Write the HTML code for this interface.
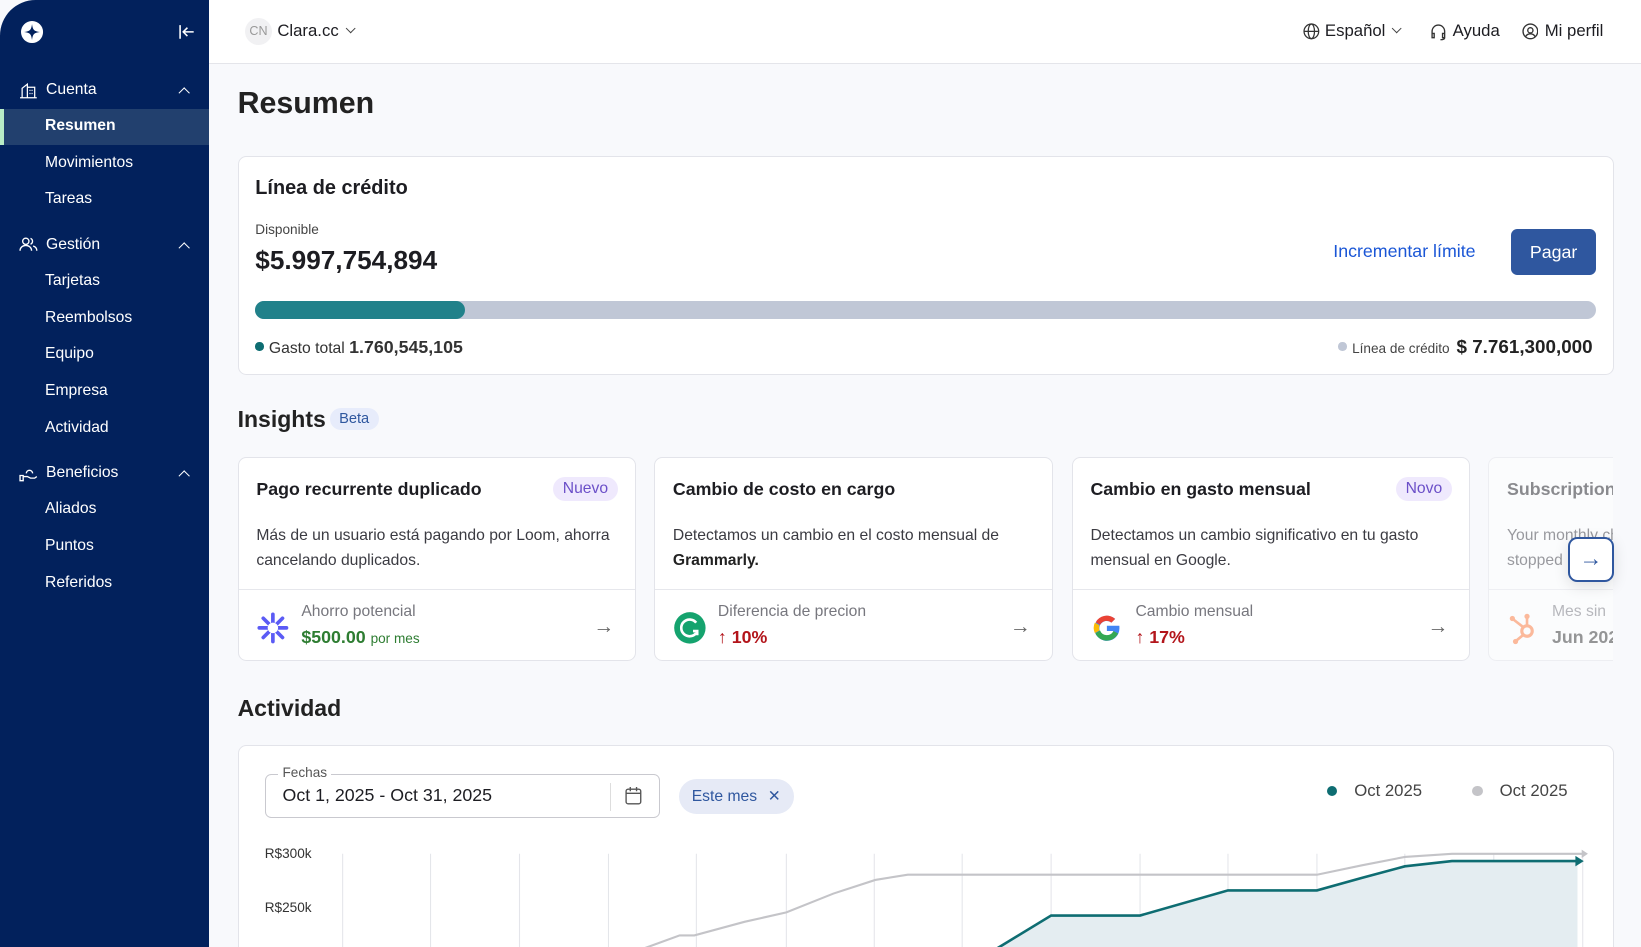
<!DOCTYPE html>
<html><head><meta charset="utf-8">
<style>
html{zoom:1.04656;overflow:hidden;height:905px}
*{box-sizing:border-box;margin:0;padding:0}
body{width:1568px;height:905px;overflow:hidden;background:#f8f9fc;font-family:"Liberation Sans",sans-serif;color:#1d1d22;position:relative}
.abs{position:absolute}
#side{left:0;top:0;width:200px;height:905px;background:#02215c;border-top-left-radius:34px;color:#fff}
#side .it{position:absolute;left:43px;font-size:15px;color:#fff}
#side .grp{position:absolute;left:18px;font-size:15px;display:flex;align-items:center;gap:8px}
.chev{position:absolute;left:172px;width:8px;height:8px;border-left:1.5px solid #fff;border-top:1.5px solid #fff;transform:rotate(45deg)}
#top{left:200px;top:0;width:1368px;height:61px;background:#fff;border-bottom:1px solid #e4e5ea}
.card{background:#fff;border:1px solid #e3e4ea;border-radius:8px;position:absolute}
.ic{position:absolute;background:#fff;border:1px solid #e3e4ea;border-radius:8px;width:381px;height:195px;top:437px;overflow:hidden}
.ic h3{position:absolute;left:17px;top:20px;font-size:17px;font-weight:bold}
.ic p{position:absolute;left:17px;top:62px;font-size:15px;line-height:24px;color:#3b3b42;width:340px}
.ic .sep{position:absolute;left:0;right:0;top:125px;border-top:1px solid #e6e7ec}
.ic .lab{position:absolute;left:60px;top:138px;font-size:15px;color:#77777e}
.ic .val{position:absolute;left:60px;top:161px;font-size:17px;font-weight:bold}
.ic .arr{position:absolute;right:20px;top:150px;font-size:20px;color:#666}
.ic .logo{position:absolute;left:14px;top:143px;width:38px;height:38px;border-radius:50%}
.badge{position:absolute;top:18px;right:17px;background:#efe9fd;color:#6b4fc8;font-size:15px;padding:3px 9px;border-radius:12px}
</style></head><body>
<div id="side" class="abs">
  <svg class="abs" style="left:19px;top:19px" width="23" height="23" viewBox="0 0 24 24"><circle cx="12" cy="12" r="11" fill="#fff"/><path d="M12 4 C12.8 10 14 11.2 20 12 C14 12.8 12.8 14 12 20 C11.2 14 10 12.8 4 12 C10 11.2 11.2 10 12 4Z" fill="#02215c"/></svg>
  <svg class="abs" style="left:170px;top:22px" width="17" height="17" viewBox="0 0 17 17" fill="none" stroke="#fff" stroke-width="1.5"><path d="M2 2v13M15 8.5H5M9 4.5l-4 4 4 4"/></svg>
  <div class="grp" style="top:77px"><svg width="18" height="18" viewBox="0 0 18 18" fill="none" stroke="#fff" stroke-width="1.2"><path d="M1 16h16M3 16V7l5-4v13M8 6h7v10M10 9h1M12 9h1M10 12h1M12 12h1"/></svg>Cuenta</div><div class="chev" style="top:85px"></div>
  <div class="abs" style="left:0;top:104px;width:200px;height:35px;background:#22406e"></div>
  <div class="abs" style="left:0;top:104px;width:4px;height:35px;background:#b8ecc6"></div>
  <div class="it" style="top:112px;font-weight:bold">Resumen</div>
  <div class="it" style="top:147px">Movimientos</div>
  <div class="it" style="top:182px">Tareas</div>
  <div class="grp" style="top:225px"><svg width="18" height="18" viewBox="0 0 18 18" fill="none" stroke="#fff" stroke-width="1.3"><circle cx="6.5" cy="6" r="3"/><path d="M1 15c0-3 2.5-5 5.5-5s5.5 2 5.5 5M11 3.2a3 3 0 010 5.6M13.5 10.5c2 .6 3.5 2.3 3.5 4.5"/></svg>Gestión</div><div class="chev" style="top:233px"></div>
  <div class="it" style="top:260px">Tarjetas</div>
  <div class="it" style="top:295px">Reembolsos</div>
  <div class="it" style="top:330px">Equipo</div>
  <div class="it" style="top:365px">Empresa</div>
  <div class="it" style="top:400px">Actividad</div>
  <div class="grp" style="top:443px"><svg width="18" height="18" viewBox="0 0 18 18" fill="none" stroke="#fff" stroke-width="1.3"><path d="M1 11h3v5H1zM4 12h4l3 1.5h4l2 -1.5M7 9a3 3 0 116 0"/></svg>Beneficios</div><div class="chev" style="top:451px"></div>
  <div class="it" style="top:478px">Aliados</div>
  <div class="it" style="top:513px">Puntos</div>
  <div class="it" style="top:548px">Referidos</div>
</div>
<div id="top" class="abs">
  <div class="abs" style="left:34px;top:17px;width:26px;height:26px;border-radius:50%;background:#f1f1f3;color:#999;font-size:12px;text-align:center;line-height:26px">CN</div>
  <div class="abs" style="left:65px;top:20px;font-size:16px">Clara.cc</div>
  <div class="abs" style="left:132px;top:24px;width:7px;height:7px;border-right:1.5px solid #444;border-bottom:1.5px solid #444;transform:rotate(45deg)"></div>
  <svg class="abs" style="left:1045px;top:22px" width="16" height="16" viewBox="0 0 16 16" fill="none" stroke="#333" stroke-width="1.2"><circle cx="8" cy="8" r="7"/><ellipse cx="8" cy="8" rx="3" ry="7"/><path d="M1 8h14"/></svg>
  <div class="abs" style="left:1066px;top:20px;font-size:16px">Español</div>
  <div class="abs" style="left:1131px;top:24px;width:7px;height:7px;border-right:1.5px solid #444;border-bottom:1.5px solid #444;transform:rotate(45deg)"></div>
  <svg class="abs" style="left:1166px;top:22px" width="16" height="17" viewBox="0 0 16 17" fill="none" stroke="#333" stroke-width="1.3"><path d="M2 10V8a6 6 0 0112 0v2M2 10h2v4H2zM12 10h2v4h-2zM14 14c0 1.5-2 2-4 2"/></svg>
  <div class="abs" style="left:1188px;top:20px;font-size:16px">Ayuda</div>
  <svg class="abs" style="left:1254px;top:22px" width="16" height="16" viewBox="0 0 16 16" fill="none" stroke="#333" stroke-width="1.3"><circle cx="8" cy="8" r="7"/><circle cx="8" cy="7" r="2.5"/><path d="M3.5 13c1-2 2.5-2.7 4.5-2.7s3.5.7 4.5 2.7"/></svg>
  <div class="abs" style="left:1276px;top:20px;font-size:16px">Mi perfil</div>
</div>
<div class="abs" style="left:227px;top:83px;font-size:29px;font-weight:bold;color:#222">Resumen</div>
<div class="card" style="left:227px;top:149px;width:1315px;height:209px">
  <div class="abs" style="left:16px;top:19px;font-size:19px;font-weight:bold">Línea de crédito</div>
  <div class="abs" style="left:16px;top:62px;font-size:13px;color:#444">Disponible</div>
  <div class="abs" style="left:16px;top:84px;font-size:25px;font-weight:bold">$5.997,754,894</div>
  <div class="abs" style="left:1046px;top:80px;font-size:17px;color:#1a56d6">Incrementar límite</div>
  <div class="abs" style="left:1216px;top:69px;width:81px;height:44px;background:#2f579f;border-radius:6px;color:#fff;font-size:17px;text-align:center;line-height:44px">Pagar</div>
  <div class="abs" style="left:16px;top:138px;width:1281px;height:17px;background:#c0c7d6;border-radius:9px"></div>
  <div class="abs" style="left:16px;top:138px;width:200px;height:17px;background:#21818a;border-radius:9px"></div>
  <div class="abs" style="left:16px;top:177px;width:8px;height:8px;border-radius:50%;background:#0e6d72"></div>
  <div class="abs" style="left:29px;top:172px;font-size:15px;color:#333">Gasto total <span style="font-size:17px;font-weight:bold;color:#333">1.760,545,105</span></div>
  <div class="abs" style="left:1051px;top:177px;width:8px;height:8px;border-radius:50%;background:#c0c7d6"></div>
  <div class="abs" style="left:1064px;top:171px;font-size:13px;color:#444">Línea de crédito <span style="font-size:18px;font-weight:bold;color:#222;margin-left:3px">$ 7.761,300,000</span></div>
</div>
<div class="abs" style="left:227px;top:388px;font-size:22px;font-weight:bold;color:#222">Insights</div>
<div class="abs" style="left:315px;top:390px;background:#e7ecfb;color:#2f579f;font-size:14px;padding:3px 9px;border-radius:12px">Beta</div>

<div class="ic" style="left:227px">
  <h3>Pago recurrente duplicado</h3><div class="badge">Nuevo</div>
  <p>Más de un usuario está pagando por Loom, ahorra cancelando duplicados.</p>
  <div class="sep"></div>
  <svg class="logo" viewBox="0 0 38 38"><g stroke="#5b5bf5" stroke-width="3.5" stroke-linecap="round"><path d="M19 6v26M6 19h26M9.8 9.8l18.4 18.4M28.2 9.8L9.8 28.2"/></g><circle cx="19" cy="19" r="5" fill="#fff"/></svg>
  <div class="lab">Ahorro potencial</div>
  <div class="val" style="color:#2e7d32">$500.00 <span style="font-size:13px;font-weight:normal">por mes</span></div>
  <div class="arr">→</div>
</div>
<div class="ic" style="left:625px">
  <h3>Cambio de costo en cargo</h3>
  <p>Detectamos un cambio en el costo mensual de <b style="color:#222">Grammarly.</b></p>
  <div class="sep"></div>
  <svg class="logo" viewBox="0 0 38 38"><circle cx="19" cy="19" r="15" fill="#15a36e"/><path d="M25 14a8 8 0 100 10M22 22h4v4" fill="none" stroke="#fff" stroke-width="2.5"/></svg>
  <div class="lab">Diferencia de precion</div>
  <div class="val" style="color:#b3151b">↑ 10%</div>
  <div class="arr">→</div>
</div>
<div class="ic" style="left:1024px">
  <h3>Cambio en gasto mensual</h3><div class="badge">Novo</div>
  <p>Detectamos un cambio significativo en tu gasto mensual en Google.</p>
  <div class="sep"></div>
  <svg class="logo" viewBox="0 0 38 38"><path d="M30 17H19v5h6.3a7 7 0 11-2-8l3.6-3.6A12 12 0 1031 19c0-.7 0-1.4-.1-2z" fill="#4285f4"/><path d="M8.3 13.6A12 12 0 0126.9 10.4l-3.6 3.6A7 7 0 0012.6 16z" fill="#ea4335"/><path d="M7.5 24a12 12 0 010-10l4.5 2.5a7 7 0 000 5z" fill="#fbbc05"/><path d="M8 24.2l4.5-2.7a7 7 0 0012.8.5l4.4 2.4A12 12 0 018 24.2z" fill="#34a853"/></svg>
  <div class="lab">Cambio mensual</div>
  <div class="val" style="color:#b3151b">↑ 17%</div>
  <div class="arr">→</div>
</div>
<div class="ic" style="left:1422px;width:160px;opacity:.5">
  <h3>Subscription</h3>
  <p style="width:400px">Your monthly charge<br>stopped</p>
  <div class="sep"></div>
  <svg class="logo" viewBox="0 0 38 38"><circle cx="22" cy="22" r="5" fill="none" stroke="#ff7a3d" stroke-width="3"/><path d="M22 17V9M18 18L9 11M18 26l-6 5" stroke="#ff7a3d" stroke-width="2.5"/><circle cx="22" cy="8" r="2.5" fill="#ff7a3d"/><circle cx="8" cy="10" r="2.5" fill="#ff7a3d"/><circle cx="11" cy="32" r="2.5" fill="#ff7a3d"/></svg>
  <div class="lab">Mes sin</div>
  <div class="val" style="color:#333">Jun 2025</div>
</div>
<div class="abs" style="left:1541px;top:437px;width:27px;height:195px;background:#f8f9fc"></div>
<div class="abs" style="left:1498px;top:513px;width:44px;height:43px;background:#fff;border:2px solid #2f579f;border-radius:9px;box-shadow:0 4px 14px rgba(0,0,0,.12);color:#2f579f;font-size:22px;text-align:center;line-height:38px">→</div>

<div class="abs" style="left:227px;top:664px;font-size:22px;font-weight:bold;color:#222">Actividad</div>
<div class="card" style="left:227px;top:712px;width:1315px;height:200px;overflow:hidden;border-bottom:none;border-bottom-left-radius:0;border-bottom-right-radius:0">
  <div class="abs" style="left:25px;top:27px;width:378px;height:42px;border:1px solid #c9c9cf;border-radius:6px"></div>
  <div class="abs" style="left:38px;top:18px;background:#fff;padding:0 4px;font-size:13px;color:#555">Fechas</div>
  <div class="abs" style="left:42px;top:37px;font-size:17px">Oct 1, 2025 - Oct 31, 2025</div>
  <div class="abs" style="left:355px;top:35px;height:27px;border-left:1px solid #ddd"></div>
  <svg class="abs" style="left:368px;top:38px" width="18" height="19" viewBox="0 0 18 19" fill="none" stroke="#555" stroke-width="1.3"><rect x="2" y="3" width="14" height="14" rx="2"/><path d="M2 7h14M6 1v4M12 1v4"/></svg>
  <div class="abs" style="left:421px;top:31px;width:110px;height:34px;background:#e6eaf6;border-radius:17px;color:#2f579f;font-size:15px;line-height:34px;padding-left:12px">Este mes <span style="margin-left:6px">✕</span></div>
  <div class="abs" style="left:1040px;top:38px;width:10px;height:10px;border-radius:50%;background:#0e6d72"></div>
  <div class="abs" style="left:1066px;top:33px;font-size:16px;color:#444">Oct 2025</div>
  <div class="abs" style="left:1179px;top:38px;width:10px;height:10px;border-radius:50%;background:#c4c4c8"></div>
  <div class="abs" style="left:1205px;top:33px;font-size:16px;color:#444">Oct 2025</div>
  <div class="abs" style="left:25px;top:95px;font-size:13px;color:#333">R$300k</div>
  <div class="abs" style="left:25px;top:147px;font-size:13px;color:#333">R$250k</div>
  <svg class="abs" style="left:0;top:0" width="1315" height="200" viewBox="227 712 1315 200">
    <g stroke="#e4e5ea" stroke-width="1">
      <path d="M326 815V912M410 815V912M495 815V912M580 815V912M664 815V912M750 815V912M834 815V912M918 815V912M1003 815V912M1088 815V912M1172 815V912M1257 815V912M1341 815V912M1426 815V912M1511 815V912"/>
    </g>
    <path d="M952 905L1003 874H1088L1172 850H1257L1300 838L1341 827L1386 822H1506V912H940Z" fill="#e4edf1"/>
    <path d="M615 905L648 893H662L710 880L750 871L795 853L835 840L866 835H1257L1300 826L1341 818L1386 815H1511" fill="none" stroke="#c4c4c8" stroke-width="2"/>
    <path d="M947 912L952 905L1003 874H1088L1172 850H1257L1300 838L1341 827L1386 822H1506" fill="none" stroke="#0e6d72" stroke-width="2.5"/>
    <path d="M1512 822l-8-5v10z" fill="#0e6d72"/><path d="M1516 815l-6-4v8z" fill="#c4c4c8"/>
  </svg>
</div>
</body></html>
